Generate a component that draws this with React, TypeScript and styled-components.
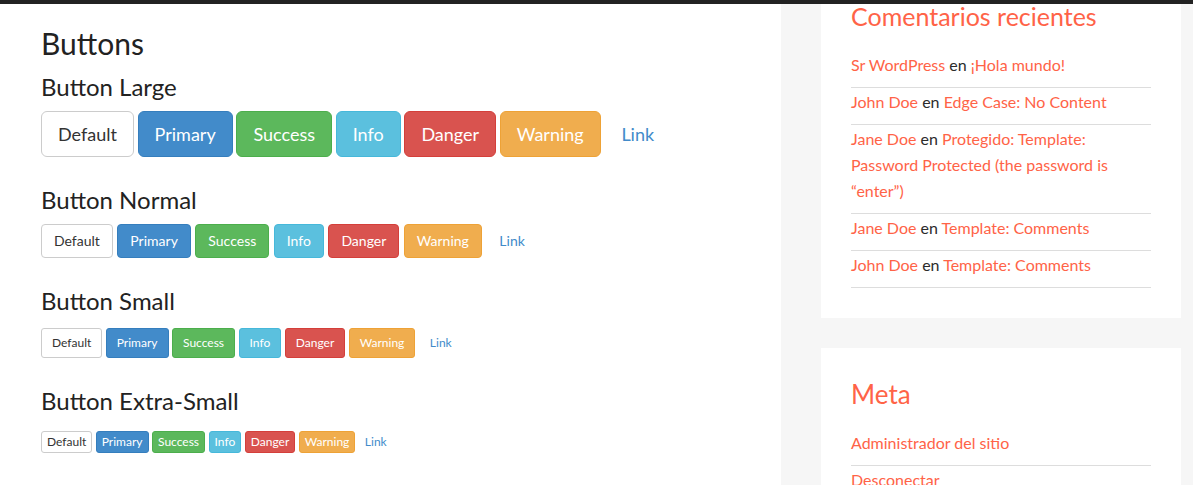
import React from "react";
import styled, { createGlobalStyle, css } from "styled-components";

const Global = createGlobalStyle`
  html, body { margin: 0; padding: 0; background: #fff; }
  body { font-family: Lato, "Open Sans", sans-serif; color: #333; overflow: hidden; }
  * { box-sizing: border-box; }
`;

type Size = "lg" | "md" | "sm" | "xs";
type Variant = "default" | "primary" | "success" | "info" | "danger" | "warning" | "link";

const sizes: Record<Size, { font: number; pad: string; radius: number; lh: number; top: number; gap: number }> = {
  lg: { font: 18, pad: "10px 16px", radius: 6, lh: 24, top: 11, gap: 3.7 },
  md: { font: 14, pad: "6px 12px", radius: 4, lh: 20, top: 11, gap: 4.5 },
  sm: { font: 12, pad: "5px 10px", radius: 3, lh: 18, top: 13, gap: 3.5 },
  xs: { font: 12, pad: "1px 5px", radius: 3, lh: 18, top: 16.5, gap: 3.5 },
};

const variants: Record<Variant, { bg: string; border: string; color: string }> = {
  default: { bg: "#ffffff", border: "#cccccc", color: "#333333" },
  primary: { bg: "#428bca", border: "#357ebd", color: "#ffffff" },
  success: { bg: "#5cb85c", border: "#4cae4c", color: "#ffffff" },
  info: { bg: "#5bc0de", border: "#46b8da", color: "#ffffff" },
  danger: { bg: "#d9534f", border: "#d43f3a", color: "#ffffff" },
  warning: { bg: "#f0ad4e", border: "#eea236", color: "#ffffff" },
  link: { bg: "transparent", border: "transparent", color: "#428bca" },
};

const TopBar = styled.div`
  position: sticky;
  top: 0;
  z-index: 2;
  height: 4px;
  background: #222222;
`;

const Layout = styled.div`
  display: grid;
  grid-template-columns: 781px 1fr;
  min-height: 481px;
`;

const Main = styled.main`
  padding: 23px 0 0 41px;
`;

const PageTitle = styled.h1`
  margin: 0;
  font-size: 30px;
  line-height: 33px;
  font-weight: 400;
  color: #222;
`;

const SectionTitle = styled.h3<{ $first?: boolean }>`
  margin: ${(p) => (p.$first ? "13.5px" : "0")} 0 0;
  font-size: 24px;
  line-height: 26.4px;
  font-weight: 400;
  color: #222;
`;

const ButtonRow = styled.div<{ $size: Size }>`
  display: flex;
  align-items: center;
  gap: ${(p) => sizes[p.$size].gap}px;
  margin: ${(p) => sizes[p.$size].top}px 0 30px;
`;

const Btn = styled.button<{ $size: Size; $variant: Variant }>`
  font-family: Lato, "Open Sans", sans-serif;
  font-weight: 400;
  cursor: pointer;
  white-space: nowrap;
  border: 1px solid ${(p) => variants[p.$variant].border};
  background: ${(p) => variants[p.$variant].bg};
  color: ${(p) => variants[p.$variant].color};
  ${(p) => css`
    font-size: ${sizes[p.$size].font}px;
    line-height: ${sizes[p.$size].lh}px;
    padding: ${sizes[p.$size].pad};
    border-radius: ${sizes[p.$size].radius}px;
  `}
`;

const Sidebar = styled.aside`
  background: #f6f6f6;
  padding: 0 12px 0 40px;
`;

const Widget = styled.section<{ $first?: boolean }>`
  background: #fff;
  width: 360px;
  padding: 32px 30px 30px;
  margin-top: ${(p) => (p.$first ? "-33.6px" : "30px")};
`;

const WidgetTitle = styled.h2<{ $small?: boolean }>`
  margin: 0 0 20px;
  font-size: ${(p) => (p.$small ? "25px" : "26px")};
  line-height: 28.6px;
  font-weight: 400;
  color: #ff6347;
`;

const List = styled.ul`
  list-style: none;
  margin: 0;
  padding: 0;
`;

const Item = styled.li`
  font-size: 16px;
  line-height: 26px;
  padding: 1px 0 9px;
  border-bottom: 1px solid #dddddd;
  color: #2b2b2b;
`;

const Link = styled.a`
  color: #ff6347;
  text-decoration: none;
`;

const rows: { title: string; size: Size }[] = [
  { title: "Button Large", size: "lg" },
  { title: "Button Normal", size: "md" },
  { title: "Button Small", size: "sm" },
  { title: "Button Extra-Small", size: "xs" },
];

const buttons: { label: string; variant: Variant }[] = [
  { label: "Default", variant: "default" },
  { label: "Primary", variant: "primary" },
  { label: "Success", variant: "success" },
  { label: "Info", variant: "info" },
  { label: "Danger", variant: "danger" },
  { label: "Warning", variant: "warning" },
  { label: "Link", variant: "link" },
];

const comments = [
  { author: "Sr WordPress", post: "¡Hola mundo!" },
  { author: "John Doe", post: "Edge Case: No Content" },
  { author: "Jane Doe", post: "Protegido: Template: Password Protected (the password is “enter”)" },
  { author: "Jane Doe", post: "Template: Comments" },
  { author: "John Doe", post: "Template: Comments" },
];

export default function App() {
  return (
    <>
      <Global />
      <TopBar />
      <Layout>
        <Main>
          <PageTitle>Buttons</PageTitle>
          {rows.map((r, i) => (
            <React.Fragment key={r.title}>
              <SectionTitle $first={i === 0}>{r.title}</SectionTitle>
              <ButtonRow $size={r.size}>
                {buttons.map((b) => (
                  <Btn key={b.label} $size={r.size} $variant={b.variant}>
                    {b.label}
                  </Btn>
                ))}
              </ButtonRow>
            </React.Fragment>
          ))}
        </Main>
        <Sidebar>
          <Widget $first>
            <WidgetTitle $small>Comentarios recientes</WidgetTitle>
            <List>
              {comments.map((c, i) => (
                <Item key={i}>
                  <Link href="#">{c.author}</Link> en <Link href="#">{c.post}</Link>
                </Item>
              ))}
            </List>
          </Widget>
          <Widget>
            <WidgetTitle>Meta</WidgetTitle>
            <List>
              <Item>
                <Link href="#">Administrador del sitio</Link>
              </Item>
              <Item>
                <Link href="#">Desconectar</Link>
              </Item>
            </List>
          </Widget>
        </Sidebar>
      </Layout>
    </>
  );
}
